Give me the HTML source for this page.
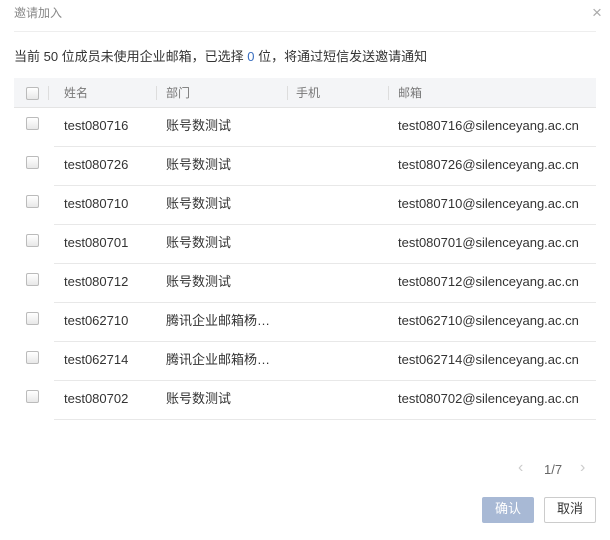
<!DOCTYPE html>
<html><head><meta charset="utf-8"><style>
body{margin:0;width:610px;height:540px;background:#fff;font-family:"Liberation Sans","Noto Sans CJK SC",sans-serif;position:relative;overflow:hidden;color:#333}
.a{position:absolute;white-space:nowrap}
.cb{position:absolute;left:26px;width:11px;height:11px;border:1px solid #bbb;border-radius:2px;background:linear-gradient(#fff,#e8e8e8)}
.row{position:absolute;left:54px;width:542px;height:39px;border-bottom:1px solid #e8e8e8}
.t{font-size:13px;color:#333}
.sep{position:absolute;top:86px;width:1px;height:14px;background:#ddd}
</style></head><body>
<div class="a" style="left:14px;top:4px;font-size:12px;color:#888">邀请加入</div>
<div class="a" style="left:592px;top:3px;font-size:17px;color:#aaa;font-weight:300">×</div>
<div style="position:absolute;left:14px;top:31px;width:582px;height:1px;background:#eee"></div>
<div class="a" style="left:14px;top:46px;font-size:13px;color:#333">当前 50 位成员未使用企业邮箱，已选择 <span style="color:#3a6fc0">0</span> 位，将通过短信发送邀请通知</div>
<div style="position:absolute;left:14px;top:78px;width:582px;height:29px;background:#f4f5f7;border-bottom:1px solid #e4e4e4"></div>
<div class="cb" style="top:87px"></div>
<div class="sep" style="left:48px"></div><div class="sep" style="left:156px"></div><div class="sep" style="left:287px"></div><div class="sep" style="left:388px"></div>
<div class="a" style="left:64px;top:84px;font-size:12px;color:#777">姓名</div>
<div class="a" style="left:166px;top:84px;font-size:12px;color:#777">部门</div>
<div class="a" style="left:296px;top:84px;font-size:12px;color:#777">手机</div>
<div class="a" style="left:398px;top:84px;font-size:12px;color:#777">邮箱</div>
<div id="rows"></div>
<script>
var d=[["test080716","账号数测试"],["test080726","账号数测试"],["test080710","账号数测试"],["test080701","账号数测试"],["test080712","账号数测试"],["test062710","腾讯企业邮箱杨…"],["test062714","腾讯企业邮箱杨…"],["test080702","账号数测试"]];
var h="";d.forEach(function(r,i){var y=107+i*39;
h+='<div class="row" style="top:'+y+'px"></div><div class="cb" style="top:'+(y+10)+'px"></div>'+
'<div class="a t" style="left:64px;top:'+(y+11)+'px">'+r[0]+'</div><div class="a t" style="left:166px;top:'+(y+8)+'px">'+r[1]+'</div><div class="a t" style="left:398px;top:'+(y+11)+'px">'+r[0]+'@silenceyang.ac.cn</div>';});
document.getElementById("rows").innerHTML=h;
</script>
<div class="a" style="left:518px;top:459px;font-size:16px;color:#ccc">‹</div>
<div class="a" style="left:544px;top:462px;font-size:13px;color:#666">1/7</div>
<div class="a" style="left:580px;top:459px;font-size:16px;color:#ccc">›</div>
<div class="a" style="left:482px;top:497px;width:52px;height:26px;background:#a8b9d5;border-radius:2px;color:#fff;font-size:13px;text-align:center;line-height:24px">确认</div>
<div class="a" style="left:544px;top:497px;width:50px;height:24px;border:1px solid #ccc;border-radius:2px;color:#333;font-size:13px;text-align:center;line-height:22px">取消</div>
</body></html>
